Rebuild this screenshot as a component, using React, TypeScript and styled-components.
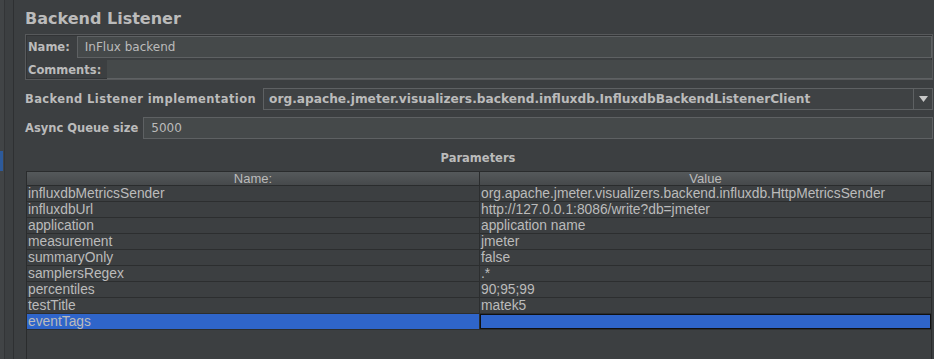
import React from 'react';
import styled, { createGlobalStyle } from 'styled-components';

const GlobalStyle = createGlobalStyle`
  html, body {
    margin: 0;
    padding: 0;
    background: #3c3f41;
  }
  body {
    font-family: 'DejaVu Sans', 'Liberation Sans', sans-serif;
    color: #bbbbbb;
  }
`;

const palette = {
  panel: '#3c3f41',
  field: '#45494a',
  fieldBorder: '#5e6163',
  text: '#bbbbbb',
  grid: '#2c2e2f',
  selection: '#2f65ca',
};

const Frame = styled.div`
  display: flex;
  width: 934px;
  height: 359px;
  overflow: hidden;
  background: ${palette.panel};
`;

const SideStrip = styled.div`
  position: relative;
  width: 9px;
  flex-shrink: 0;
  border-left: 4px solid #414446;
  border-right: 1px solid #2e3032;
  box-shadow: inset 1px 0 0 #333537;

  &::before {
    content: '';
    position: absolute;
    left: -4px;
    top: 151px;
    width: 3px;
    height: 20px;
    background: #2d5a9a;
  }
`;

const Main = styled.div`
  flex: 1;
  display: flex;
  flex-direction: column;
  padding: 8px 1px 0 11px;
  min-width: 0;
`;

const Title = styled.h1`
  margin: 0 0 5px;
  font-family: 'DejaVu Sans', sans-serif;
  font-size: 16px;
  font-weight: bold;
  line-height: 21px;
  color: ${palette.text};
`;

const NameBox = styled.div`
  display: flex;
  flex-direction: column;
  gap: 2px;
  border: 1px solid #57595b;
  box-shadow: inset 0 0 0 1px #323436;
  padding: 1px 0 0 2px;
  height: 46px;
  box-sizing: border-box;
`;

const FieldRow = styled.div<{ $height: number }>`
  display: flex;
  align-items: center;
  height: ${(p) => p.$height}px;
`;

const Label = styled.span<{ $gap?: number; $spacing?: number }>`
  font-family: 'DejaVu Sans', sans-serif;
  font-size: 11.5px;
  font-weight: bold;
  letter-spacing: ${(p) => p.$spacing ?? 0}px;
  color: ${palette.text};
  white-space: nowrap;
  padding-right: ${(p) => p.$gap ?? 6}px;
`;

const TextField = styled.div<{ $flat?: boolean }>`
  flex: 1;
  align-self: stretch;
  display: flex;
  align-items: center;
  padding: 0 7px;
  background: ${palette.field};
  border: ${(p) => (p.$flat ? 'none' : `1px solid ${palette.fieldBorder}`)};
  border-bottom: 1px solid ${palette.fieldBorder};
  font-family: 'DejaVu Sans', sans-serif;
  font-size: 12px;
  color: ${palette.text};
`;

const FormRow = styled.div<{ $top: number }>`
  display: flex;
  align-items: center;
  height: 22px;
  margin-top: ${(p) => p.$top}px;
`;

const Combo = styled.div`
  flex: 1;
  align-self: stretch;
  display: flex;
  border: 1px solid ${palette.fieldBorder};
  background: #3f4244;
`;

const ComboValue = styled.div`
  flex: 1;
  display: flex;
  align-items: center;
  padding-left: 5px;
  font-family: 'DejaVu Sans', sans-serif;
  font-size: 12.2px;
  font-weight: bold;
  color: ${palette.text};
  white-space: nowrap;
  overflow: hidden;
`;

const ComboArrow = styled.div`
  width: 18px;
  display: flex;
  align-items: center;
  justify-content: center;
  border-left: 1px solid ${palette.fieldBorder};
`;

const SectionTitle = styled.div`
  margin: 11px 0 0;
  padding-right: 2px;
  text-align: center;
  font-family: 'DejaVu Sans', sans-serif;
  font-size: 11.5px;
  font-weight: bold;
  line-height: 16px;
  color: ${palette.text};
`;

const TableBox = styled.div`
  margin: 5px 1px 0 1px;
  flex: 1;
  border: 1px solid #2a2c2d;
  border-bottom: none;
  display: flex;
  flex-direction: column;
`;

const Grid = styled.div`
  display: grid;
  grid-template-columns: 452px 1fr;
`;

const HeadCell = styled.div`
  height: 13px;
  line-height: 13px;
  text-align: center;
  background: linear-gradient(#55595b, #46494b);
  border-bottom: 1px solid #2a2c2d;
  font-family: 'Liberation Sans', sans-serif;
  font-size: 13px;
  color: ${palette.text};

  & + & {
    border-left: 1px solid #2a2c2d;
  }
`;

const Cell = styled.div<{ $selected?: boolean; $focused?: boolean; $value?: boolean }>`
  height: 15px;
  line-height: 15px;
  padding-left: 1px;
  border-bottom: 1px solid ${palette.grid};
  border-left: ${(p) => (p.$value ? `1px solid ${palette.grid}` : 'none')};
  background: ${(p) => (p.$selected ? palette.selection : 'transparent')};
  box-shadow: ${(p) => (p.$focused ? 'inset 0 0 0 1px #111' : 'none')};
  font-family: 'Liberation Sans', sans-serif;
  font-size: 13.8px;
  color: ${palette.text};
  white-space: nowrap;
  overflow: hidden;
`;

const params: [string, string][] = [
  ['influxdbMetricsSender', 'org.apache.jmeter.visualizers.backend.influxdb.HttpMetricsSender'],
  ['influxdbUrl', 'http://127.0.0.1:8086/write?db=jmeter'],
  ['application', 'application name'],
  ['measurement', 'jmeter'],
  ['summaryOnly', 'false'],
  ['samplersRegex', '.*'],
  ['percentiles', '90;95;99'],
  ['testTitle', 'matek5'],
  ['eventTags', ''],
];

export default function App() {
  const selectedRow = params.length - 1;

  return (
    <>
      <GlobalStyle />
      <Frame>
        <SideStrip />
        <Main>
          <Title>Backend Listener</Title>
          <NameBox>
            <FieldRow $height={22}>
              <Label $gap={7}>Name:</Label>
              <TextField>InFlux backend</TextField>
            </FieldRow>
            <FieldRow $height={19}>
              <Label>Comments:</Label>
              <TextField $flat />
            </FieldRow>
          </NameBox>
          <FormRow $top={8}>
            <Label $spacing={0.4} $gap={7}>Backend Listener implementation</Label>
            <Combo>
              <ComboValue>org.apache.jmeter.visualizers.backend.influxdb.InfluxdbBackendListenerClient</ComboValue>
              <ComboArrow>
                <svg width="9" height="6" viewBox="0 0 9 6">
                  <path d="M0 0h9L4.5 6z" fill="#c8c8c8" />
                </svg>
              </ComboArrow>
            </Combo>
          </FormRow>
          <FormRow $top={7}>
            <Label $gap={5}>Async Queue size</Label>
            <TextField>5000</TextField>
          </FormRow>
          <SectionTitle>Parameters</SectionTitle>
          <TableBox>
            <Grid>
              <HeadCell>Name:</HeadCell>
              <HeadCell>Value</HeadCell>
              {params.map(([name, value], i) => (
                <React.Fragment key={name}>
                  <Cell $selected={i === selectedRow}>{name}</Cell>
                  <Cell $value $selected={i === selectedRow} $focused={i === selectedRow}>
                    {value}
                  </Cell>
                </React.Fragment>
              ))}
            </Grid>
          </TableBox>
        </Main>
      </Frame>
    </>
  );
}
